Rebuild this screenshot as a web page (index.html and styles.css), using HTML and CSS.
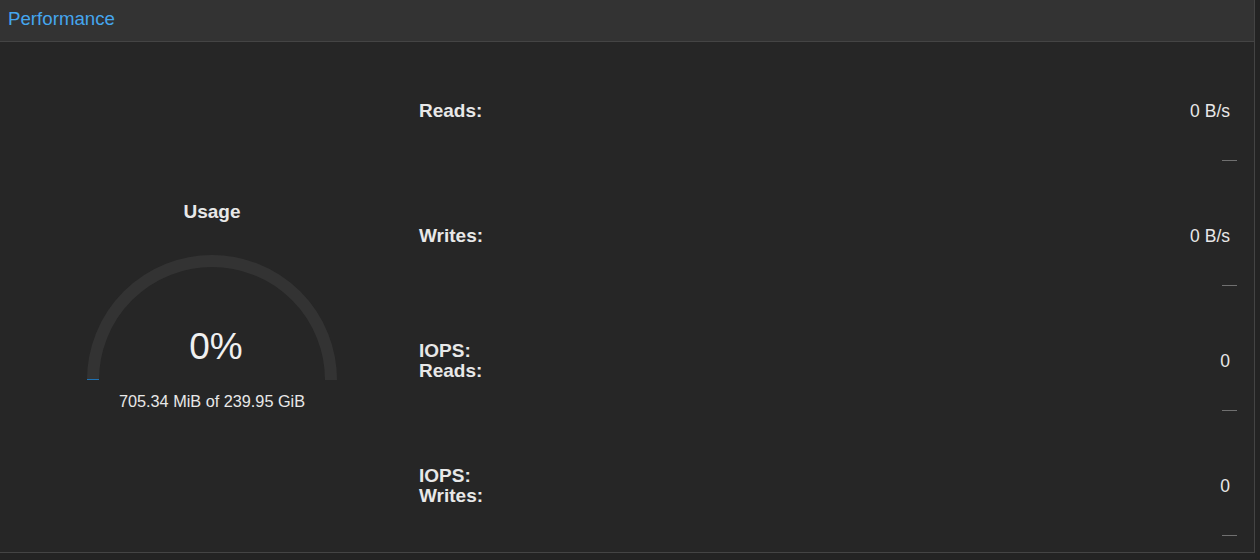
FILE: index.html
```html
<!DOCTYPE html>
<html>
<head>
<meta charset="utf-8">
<link rel="stylesheet" href="styles.css">
</head>
<body>
<div class="panel">
  <div class="header"><span class="title">Performance</span></div>
  <div class="content">
    <div class="usage">
      <div class="usage-title">Usage</div>
      <svg class="gauge" width="250" height="126" viewBox="0 0 250 126">
        <path d="M6 125 A119 119 0 0 1 244 125" fill="none" stroke="#333333" stroke-width="12"/>
        <rect x="0" y="124" width="12" height="1" fill="#1f72b3"/>
        <text x="129" y="104" text-anchor="middle" class="pct">0%</text>
      </svg>
      <div class="usage-sub">705.34 MiB of 239.95 GiB</div>
    </div>
    <div class="stats">
      <div class="row">
        <div class="line"><div class="label">Reads:</div><div class="value">0 B/s</div></div>
        <div class="spark"><span class="dash"></span></div>
      </div>
      <div class="row">
        <div class="line"><div class="label">Writes:</div><div class="value">0 B/s</div></div>
        <div class="spark"><span class="dash"></span></div>
      </div>
      <div class="row">
        <div class="line"><div class="label">IOPS:<br>Reads:</div><div class="value">0</div></div>
        <div class="spark"><span class="dash"></span></div>
      </div>
      <div class="row">
        <div class="line"><div class="label">IOPS:<br>Writes:</div><div class="value">0</div></div>
        <div class="spark"><span class="dash"></span></div>
      </div>
    </div>
  </div>
</div>
</body>
</html>
```
FILE: styles.css
```css
html, body {
  margin: 0;
  padding: 0;
  background: #232323;
  font-family: "Liberation Sans", Arial, sans-serif;
  color: #e8e8e8;
}
.panel {
  width: 1254px;
  height: 552px;
  background: #262626;
  border-right: 1px solid #444444;
  border-bottom: 1px solid #444444;
  display: flex;
  flex-direction: column;
}
.header {
  height: 42px;
  box-sizing: border-box;
  background: #333333;
  border-bottom: 1px solid #444444;
  display: flex;
  align-items: center;
  padding-left: 8px;
}
.title {
  font-size: 18.7px;
  color: #45a6ee;
  position: relative;
  top: -2px;
}
.content {
  flex: 1;
  display: flex;
}
.usage {
  width: 419px;
  padding-top: 159px;
  box-sizing: border-box;
  display: flex;
  flex-direction: column;
}
.usage-title {
  width: 250px;
  margin-left: 87px;
  text-align: center;
  font-weight: bold;
  font-size: 19px;
  line-height: 22px;
}
.gauge {
  display: block;
  margin-left: 87px;
  margin-top: 32px;
}
.pct {
  font-family: "Liberation Sans", Arial, sans-serif;
  font-size: 37px;
  fill: #f0f0f0;
}
.usage-sub {
  width: 250px;
  margin-left: 87px;
  margin-top: 11px;
  text-align: center;
  font-size: 16.25px;
  line-height: 19px;
}
.stats {
  flex: 1;
  padding-top: 7px;
  display: flex;
  flex-direction: column;
}
.row {
  height: 125px;
  display: flex;
  flex-direction: column;
}
.line {
  height: 76px;
  margin-top: 24px;
  display: flex;
  align-items: center;
  justify-content: space-between;
  padding-right: 24px;
}
.label {
  font-weight: bold;
  font-size: 19px;
  line-height: 20px;
}
.value {
  font-size: 17.5px;
}
.spark {
  height: 25px;
  display: flex;
  justify-content: flex-end;
  padding-right: 17px;
}
.dash {
  width: 15px;
  height: 1px;
  margin-top: 11px;
  background: #707070;
}
```
